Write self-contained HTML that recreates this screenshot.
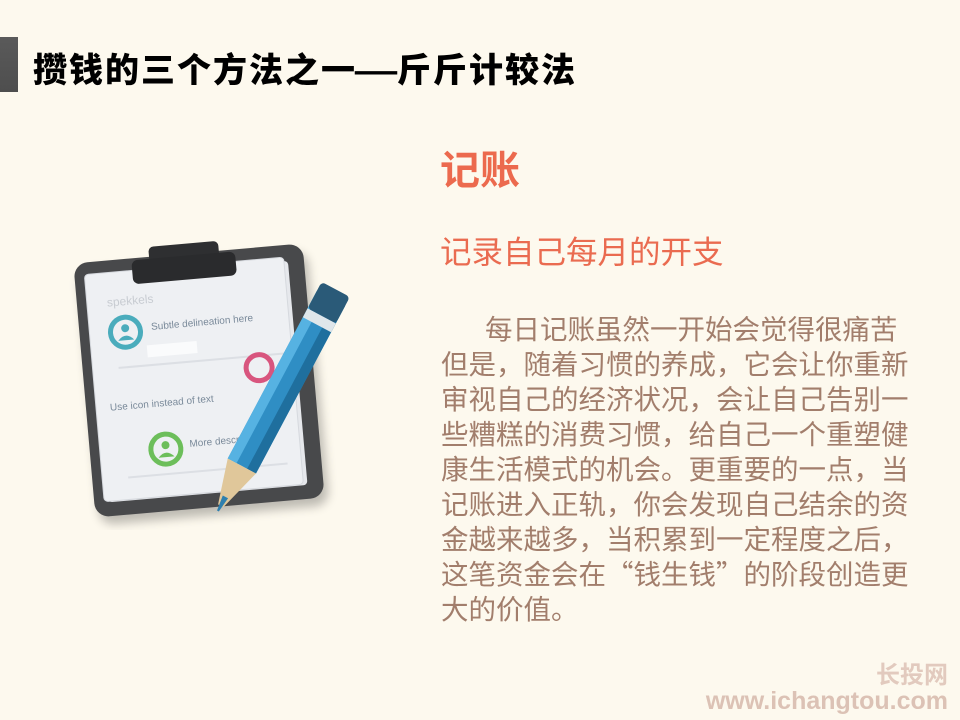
<!DOCTYPE html>
<html><head><meta charset="utf-8"><style>
body{margin:0;width:960px;height:720px;background:#fdf9ee;position:relative;overflow:hidden;font-family:"Liberation Sans","Noto Sans CJK SC",sans-serif}
.bar{position:absolute;left:0;top:37px;width:18px;height:55px;background:linear-gradient(#5a5a5a,#4e4e4e)}
.t{position:absolute;left:33px;top:46px;font-size:34px;font-weight:900;letter-spacing:2px;line-height:44px;color:#000;font-family:"Noto Sans CJK SC",sans-serif;white-space:nowrap}
.t i{font-style:normal;font-family:"Liberation Sans",sans-serif;letter-spacing:0;display:inline-block;transform:scaleX(1.25);margin:0 4px 0 2px}
.h{position:absolute;left:440px;top:142px;font-size:40px;font-weight:bold;color:#ec6a4e;font-family:"Noto Sans CJK SC",sans-serif;line-height:50px}
.s{position:absolute;left:440px;top:230px;font-size:31.5px;color:#ea6b50;font-family:"Noto Sans CJK SC",sans-serif;line-height:40px;white-space:nowrap}
.b{position:absolute;left:441px;top:310px;font-size:27.5px;line-height:35px;color:#a27e6c;font-family:"Noto Sans CJK SC",sans-serif;white-space:nowrap}
.w1{position:absolute;right:12px;top:658px;font-size:24px;font-weight:bold;color:#e2cabe;font-family:"Noto Sans CJK SC",sans-serif;line-height:30px}
.w2{position:absolute;right:12px;top:686px;font-size:25px;font-weight:bold;color:#dcc2b5;line-height:30px}
</style></head><body>
<div class="bar"></div>
<div class="t">攒钱的三个方法之一<i>—</i>斤斤计较法</div>
<div class="h">记账</div>
<div class="s">记录自己每月的开支</div>
<div class="b"><span style="display:inline-block;width:44px"></span>每日记账虽然一开始会觉得很痛苦<br>但是，随着习惯的养成，它会让你重新<br>审视自己的经济状况，会让自己告别一<br>些糟糕的消费习惯，给自己一个重塑健<br>康生活模式的机会。更重要的一点，当<br>记账进入正轨，你会发现自己结余的资<br>金越来越多，当积累到一定程度之后，<br>这笔资金会在“钱生钱”的阶段创造更<br>大的价值。</div>
<div class="w1">长投网</div>
<div class="w2">www.ichangtou.com</div>
<svg style="position:absolute;left:60px;top:230px" width="300" height="300" viewBox="0 0 300 300">
<defs><filter id="sh"><feGaussianBlur stdDeviation="5"/></filter></defs>
<g transform="rotate(-5 150 150)">
<rect x="28" y="30" width="230" height="255" rx="14" fill="#000" opacity=".25" filter="url(#sh)"/>
<rect x="24" y="22" width="230" height="255" rx="14" fill="#48494b"/>
<rect x="38" y="38" width="200" height="225" rx="4" fill="#e6e8ec"/>
<rect x="34" y="34" width="200" height="228" rx="4" fill="#eef0f3" stroke="#d6d9de"/>
<text x="54" y="68" font-size="12" fill="#c8ccd2" font-family="Liberation Sans">spekkels</text>
<circle cx="70" cy="95" r="15" fill="none" stroke="#4aacbc" stroke-width="5"/>
<circle cx="70" cy="91" r="4" fill="#4aacbc"/><path d="M62 103q8-9 16 0z" fill="#4aacbc"/>
<text x="96" y="95" font-size="10" fill="#7a8a9a" font-family="Liberation Sans">Subtle delineation here</text>
<line x1="60" y1="130" x2="230" y2="130" stroke="#dcdfe4" stroke-width="2"/>
<rect x="90" y="110" width="50" height="12" fill="#fafbfc"/>
<circle cx="200" cy="142" r="13" fill="none" stroke="#d8557e" stroke-width="5"/>
<text x="48" y="172" font-size="10" fill="#7a8a9a" font-family="Liberation Sans">Use icon instead of text</text>
<circle cx="100" cy="215" r="15" fill="none" stroke="#6cbe5a" stroke-width="5"/>
<circle cx="100" cy="211" r="4" fill="#6cbe5a"/><path d="M92 223q8-9 16 0z" fill="#6cbe5a"/>
<text x="124" y="215" font-size="10" fill="#7a8a9a" font-family="Liberation Sans">More descr</text>
<line x1="60" y1="240" x2="220" y2="240" stroke="#dcdfe4" stroke-width="2"/>
<rect x="100" y="12" width="70" height="20" rx="5" fill="#2e2f31"/>
<rect x="82" y="24" width="104" height="24" rx="6" fill="#2a2b2d"/>
</g>
<g transform="rotate(28 220 160)">
<rect x="206" y="55" width="32" height="190" fill="#2f8ec4"/>
<rect x="206" y="55" width="10" height="190" fill="#56b2e2"/>
<rect x="228" y="55" width="10" height="190" fill="#1f6f9e"/>
<rect x="206" y="45" width="32" height="30" rx="4" fill="#2a5a78"/>
<rect x="206" y="75" width="32" height="10" fill="#dfe6ea"/>
<path d="M206 245 L238 245 L225 290 L219 290 Z" fill="#e0c79a"/>
<path d="M219 280 L225 280 L223 296 L221 296 Z" fill="#2e7fae"/>
</g>
</svg>
</body></html>
